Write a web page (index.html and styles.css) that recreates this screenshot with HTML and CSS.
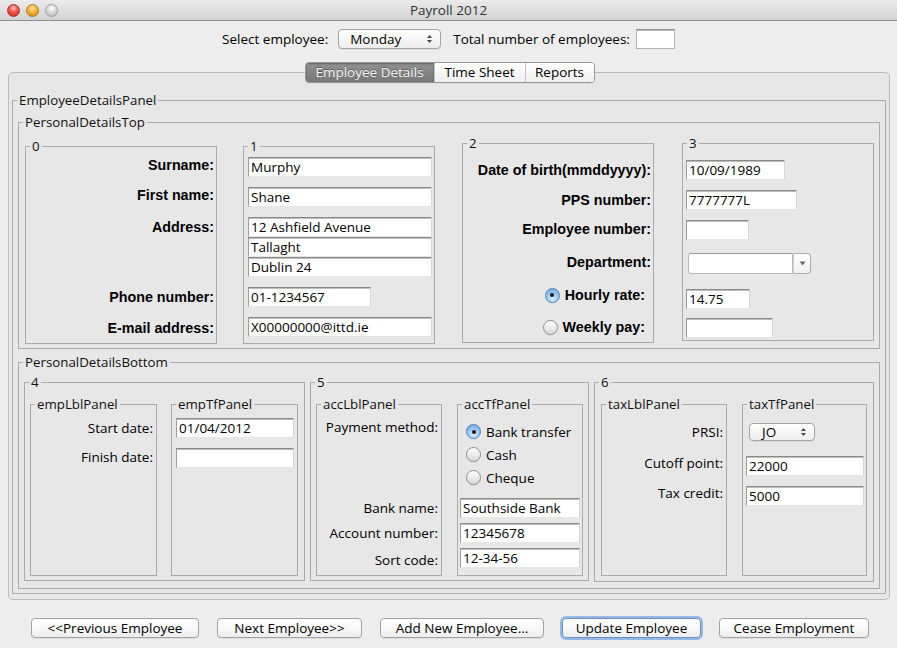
FILE: index.html
```html
<!DOCTYPE html>
<html>
<head>
<meta charset="utf-8">
<title>Payroll 2012</title>
<link rel="stylesheet" href="styles.css">
</head>
<body>
<div class="window">
  <div class="titlebar">
    <div class="lights"><span class="light red"></span><span class="light amber"></span><span class="light grey"></span></div>
    <div class="title">Payroll 2012</div>
    <div></div>
  </div>

  <div class="toprow">
    <span class="txt">Select employee:</span>
    <div class="popup popup-emp"><span class="popup-text">Monday</span><svg class="updown" width="7" height="10" viewBox="0 0 7 10"><path d="M1 4 L3.5 1 L6 4 Z"/><path d="M1 6 L3.5 9 L6 6 Z"/></svg></div>
    <span class="txt txt-total">Total number of employees:</span>
    <div class="tf tf-total"></div>
  </div>

  <div class="tabpane">
    <div class="tabs">
      <div class="tabs-inner">
        <div class="tab tab-sel tab-ed">Employee Details</div>
        <div class="tab tab-ts">Time Sheet</div>
        <div class="tab tab-rep">Reports</div>
      </div>
    </div>
    <div class="tabbody">
      <fieldset class="tb edp">
        <legend>EmployeeDetailsPanel</legend>
        <div class="edp-in">
          <fieldset class="tb pdt">
            <legend>PersonalDetailsTop</legend>
            <div class="pdt-in">
              <fieldset class="tb p01 p0">
                <legend>0</legend>
                <div class="col col-right pad-r2">
                  <div class="blbl mt1">Surname:</div>
                  <div class="blbl mt10">First name:</div>
                  <div class="blbl mt12">Address:</div>
                  <div class="blbl mt50">Phone number:</div>
                  <div class="blbl mt11">E-mail address:</div>
                </div>
              </fieldset>
              <fieldset class="tb p01 p1">
                <legend>1</legend>
                <div class="col pad-l4">
                  <div class="tf w184 mt3">Murphy</div>
                  <div class="tf w184 mt10">Shane</div>
                  <div class="tf w184 mt10">12 Ashfield Avenue</div>
                  <div class="tf w184">Tallaght</div>
                  <div class="tf w184">Dublin 24</div>
                  <div class="tf w123 mt10">01-1234567</div>
                  <div class="tf w184 mt10">X00000000@ittd.ie</div>
                </div>
              </fieldset>
              <fieldset class="tb p23 p2">
                <legend>2</legend>
                <div class="col col-right pad-r2">
                  <div class="blbl mt9">Date of birth(mmddyyyy):</div>
                  <div class="blbl mt10">PPS number:</div>
                  <div class="blbl mt9">Employee number:</div>
                  <div class="blbl mt13">Department:</div>
                  <div class="blbl radio-lbl mt13"><span class="radio on"></span>Hourly rate:</div>
                  <div class="blbl radio-lbl mt12"><span class="radio"></span>Weekly pay:</div>
                </div>
              </fieldset>
              <fieldset class="tb p23 p3">
                <legend>3</legend>
                <div class="col pad-l3">
                  <div class="tf w99 mt9">10/09/1989</div>
                  <div class="tf w111 mt10">7777777L</div>
                  <div class="tf w63 mt10"></div>
                  <div class="combo-edit mt13">
                    <div class="ce-field"></div>
                    <div class="ce-btn"><svg width="7" height="5" viewBox="0 0 7 5"><path d="M0.5 0.5 L6.5 0.5 L3.5 4.5 Z"/></svg></div>
                  </div>
                  <div class="tf w64 mt15">14.75</div>
                  <div class="tf w87 mt9"></div>
                </div>
              </fieldset>
            </div>
          </fieldset>

          <fieldset class="tb pdb">
            <legend>PersonalDetailsBottom</legend>
            <div class="pdb-in">
              <fieldset class="tb p4">
                <legend>4</legend>
                <div class="sub-row sub-row4">
                  <fieldset class="tb sub sub-a">
                    <legend>empLblPanel</legend>
                    <div class="col col-right pad-r3">
                      <div class="lbl mt6">Start date:</div>
                      <div class="lbl mt9">Finish date:</div>
                    </div>
                  </fieldset>
                  <fieldset class="tb sub sub-b4">
                    <legend>empTfPanel</legend>
                    <div class="col pad-l4">
                      <div class="tf w118 mt6">01/04/2012</div>
                      <div class="tf w118 mt10"></div>
                    </div>
                  </fieldset>
                </div>
              </fieldset>
              <fieldset class="tb p5">
                <legend>5</legend>
                <div class="sub-row">
                  <fieldset class="tb sub sub-a">
                    <legend>accLblPanel</legend>
                    <div class="col col-right pad-r3">
                      <div class="lbl mt5">Payment method:</div>
                      <div class="lbl mt61">Bank name:</div>
                      <div class="lbl mt5">Account number:</div>
                      <div class="lbl mt7">Sort code:</div>
                    </div>
                  </fieldset>
                  <fieldset class="tb sub sub-b">
                    <legend>accTfPanel</legend>
                    <div class="col">
                      <div class="radio-row mt8"><span class="radio on"></span>Bank transfer</div>
                      <div class="radio-row"><span class="radio"></span>Cash</div>
                      <div class="radio-row"><span class="radio"></span>Cheque</div>
                      <div class="tf w120 ml2 mt9">Southside Bank</div>
                      <div class="tf w120 ml2 mt5">12345678</div>
                      <div class="tf w120 ml2 mt5">12-34-56</div>
                    </div>
                  </fieldset>
                </div>
              </fieldset>
              <fieldset class="tb p6">
                <legend>6</legend>
                <div class="sub-row sub-row6">
                  <fieldset class="tb sub sub-a">
                    <legend>taxLblPanel</legend>
                    <div class="col col-right pad-r3">
                      <div class="lbl mt10">PRSI:</div>
                      <div class="lbl mt11">Cutoff point:</div>
                      <div class="lbl mt10">Tax credit:</div>
                    </div>
                  </fieldset>
                  <fieldset class="tb sub sub-b6">
                    <legend>taxTfPanel</legend>
                    <div class="col">
                      <div class="popup popup-prsi mt11"><span class="popup-text">JO</span><svg class="updown" width="7" height="10" viewBox="0 0 7 10"><path d="M1 4 L3.5 1 L6 4 Z"/><path d="M1 6 L3.5 9 L6 6 Z"/></svg></div>
                      <div class="tf w118 ml3 mt15">22000</div>
                      <div class="tf w118 ml3 mt10">5000</div>
                    </div>
                  </fieldset>
                </div>
              </fieldset>
            </div>
          </fieldset>
        </div>
      </fieldset>
    </div>
  </div>

  <div class="buttons">
    <div class="btn bw-prev">&lt;&lt;Previous Employee</div>
    <div class="btn bw-next">Next Employee&gt;&gt;</div>
    <div class="btn bw-add">Add New Employee...</div>
    <div class="btn btn-focus bw-upd">Update Employee</div>
    <div class="btn bw-cease">Cease Employment</div>
  </div>
</div>
</body>
</html>
```

FILE: styles.css
```css
* { box-sizing: border-box; }
html, body { margin: 0; padding: 0; }
body {
  background: #ededed;
  font-family: "Open Sans", "DejaVu Sans", sans-serif;
  font-size: 13.5px;
  color: #000;
}
.window { width: 897px; height: 648px; background: #ededed; overflow: hidden; }

/* title bar */
.titlebar {
  height: 21px;
  display: grid;
  grid-template-columns: 1fr auto 1fr;
  align-items: center;
  background: linear-gradient(#ebebeb, #d2d2d2);
  border-bottom: 1px solid #8d8d8d;
}
.lights { display: flex; gap: 6px; padding-left: 7px; }
.light { width: 13px; height: 13px; border-radius: 50%; }
.red { background: radial-gradient(circle at 50% 30%, #ffc1bb 0%, #f1534b 45%, #c7261e 100%); border: 1px solid #a9352f; }
.amber { background: radial-gradient(circle at 50% 30%, #ffe4a8 0%, #f6b03c 45%, #cc800e 100%); border: 1px solid #b07b22; }
.grey { background: radial-gradient(circle at 50% 30%, #ffffff 0%, #d6d6d6 50%, #b4b4b4 100%); border: 1px solid #a0a0a0; }
.title { font-size: 13.5px; color: #333; line-height: 20px; }

/* top row */
.toprow {
  margin-top: 8px;
  height: 20px;
  display: flex;
  justify-content: center;
  align-items: center;
}
.txt { line-height: 20px; }
.popup {
  height: 20px;
  border: 1px solid #a3a3a3;
  border-radius: 4px;
  background: linear-gradient(#ffffff, #f6f6f6 50%, #ececec 100%);
  box-shadow: 0 1px 0 rgba(0,0,0,0.06);
  display: flex;
  align-items: center;
  justify-content: space-between;
}
.popup-text { line-height: 18px; }
.updown { fill: #4a4a4a; }
.popup-emp { width: 103px; margin-left: 10px; padding: 0 7px 0 11px; }
.txt-total { margin-left: 12px; }
.popup-prsi { width: 66px; height: 18px; margin-left: 6px; padding: 0 7px 0 12px; }

/* text field */
.tf {
  height: 20px;
  background: #fff;
  border-top: 1px solid #8a8a8a;
  border-left: 1px solid #9c9c9c;
  border-right: 1px solid #d6d6d6;
  border-bottom: 1px solid #e6e6e6;
  box-shadow: inset 0 1px 0 #bdbdbd;
  padding: 0 2px;
  line-height: 19px;
  white-space: nowrap;
  overflow: hidden;
}
.tf-total { width: 39px; margin-left: 6px; border: 1px solid #b3b3b3; border-top-color: #8a8a8a; }
.w184 { width: 184px; }
.w123 { width: 123px; }
.w99 { width: 99px; }
.w111 { width: 111px; }
.w63 { width: 63px; }
.w64 { width: 64px; }
.w87 { width: 87px; }
.w118 { width: 118px; }
.w120 { width: 120px; }
.ml2 { margin-left: 2px; }
.ml3 { margin-left: 3px; }

/* tabs */
.tabpane { margin: 13px 7px 0 8px; }
.tabs { display: flex; justify-content: center; position: relative; z-index: 1; height: 21px; padding-left: 1px; }
.tabs-inner {
  display: flex;
  border: 1px solid #979797;
  border-radius: 4px;
  overflow: hidden;
  height: 21px;
  box-shadow: 0 1px 0 rgba(0,0,0,0.05);
}
.tab {
  height: 19px;
  line-height: 19px;
  text-align: center;
  background: linear-gradient(#ffffff, #f7f7f7 50%, #eeeeee 100%);
  border-left: 1px solid #c4c4c4;
}
.tab-ed { width: 128px; border-left: none; }
.tab-ts { width: 91px; }
.tab-rep { width: 69px; }
.tab-sel {
  background: linear-gradient(#929292, #787878);
  color: #f4f4f4;
  text-shadow: 0 -1px 0 rgba(0,0,0,0.35);
  box-shadow: inset 0 1px 2px rgba(0,0,0,0.35);
}
.tabbody {
  margin-top: -11px;
  height: 528px;
  border: 1px solid #bcbcbc;
  border-radius: 5px;
  background: #e7e7e7;
  padding-top: 19px;
}

/* titled borders */
.tb {
  margin: 0;
  padding: 0;
  min-width: 0;
  border: 1px solid #ababab;
}
.tb > legend {
  margin-left: 4px;
  padding: 0 2px;
  line-height: 16px;
  height: 16px;
  font-size: 13.3px;
  color: #111;
}
.edp { margin: 0 3px; height: 502px; }
.edp-in { padding: 6px 5px 0 5px; }
.pdt { height: 235px; }
.pdt-in { display: flex; align-items: flex-start; padding-left: 6px; }
.p01 { width: 192px; height: 206px; margin-top: 8px; }
.p1 { margin-left: 26px; }
.p23 { width: 192px; margin-top: 5px; }
.p2 { margin-left: 27px; height: 208px; }
.p3 { margin-left: 28px; height: 206px; }

.pdb { height: 235px; margin-top: 5px; }
.pdb-in { display: flex; align-items: flex-start; padding-left: 5px; }
.p4 { width: 281px; height: 207px; margin-top: 4px; }
.p5 { width: 279px; height: 207px; margin-top: 4px; margin-left: 5px; }
.p6 { width: 280px; height: 208px; margin-top: 4px; margin-left: 5px; }

.sub-row { display: flex; align-items: flex-start; padding: 6px 0 0 5px; }
.sub-row6 { padding-left: 6px; }
.sub { height: 180px; }
.sub-a { width: 126px; }
.sub-row4 .sub-a { width: 127px; }
.sub-b4 { width: 127px; margin-left: 14px; }
.sub-b { width: 126px; margin-left: 15px; }
.sub-b6 { width: 125px; margin-left: 15px; }

/* columns */
.col { display: flex; flex-direction: column; align-items: flex-start; }
.col-right { align-items: flex-end; }
.pad-r2 { padding-right: 2px; }
.pad-r3 { padding-right: 3px; }
.pad-l3 { padding-left: 3px; }
.pad-l4 { padding-left: 4px; }

.blbl {
  font-family: "Liberation Sans", Arial, sans-serif;
  font-weight: bold;
  font-size: 14.3px;
  line-height: 20px;
  white-space: nowrap;
}
.lbl { line-height: 20px; white-space: nowrap; }

.radio-lbl { display: flex; align-items: center; padding-right: 6px; }
.radio-lbl .radio { margin-right: 5px; }
.radio-row { display: flex; align-items: center; height: 23px; padding-left: 8px; white-space: nowrap; }
.radio-row .radio { margin-right: 5px; }

.radio {
  position: relative;
  display: inline-block;
  width: 15px;
  height: 15px;
  border-radius: 50%;
  border: 1px solid #8e8e8e;
  background: linear-gradient(#ffffff, #ececec 50%, #d9d9d9);
  box-shadow: 0 1px 0 rgba(0,0,0,0.05);
  flex: none;
}
.radio.on {
  border-color: #5a82ad;
  background: radial-gradient(circle at 50% 75%, #d7ecfc 0%, #9ccbf3 45%, #5fa2e0 100%);
}
.radio.on::after {
  content: "";
  position: absolute;
  left: 4.5px;
  top: 4.5px;
  width: 4px;
  height: 4px;
  border-radius: 50%;
  background: #1b1b1b;
}

/* editable combo */
.combo-edit { display: flex; width: 123px; height: 21px; margin-left: 2px; }
.ce-field {
  flex: 1;
  background: #fff;
  border: 1px solid #b9b9b9;
  border-top-color: #9a9a9a;
  border-radius: 3px 0 0 3px;
}
.ce-btn {
  width: 18px;
  border: 1px solid #ababab;
  border-left: 1px solid #cfcfcf;
  border-radius: 0 4px 4px 0;
  background: linear-gradient(#ffffff, #f0f0f0);
  display: flex;
  align-items: center;
  justify-content: center;
  fill: #6a6a6a;
}

/* margins */
.mt1 { margin-top: 1px; }
.mt3 { margin-top: 3px; }
.mt5 { margin-top: 5px; }
.mt6 { margin-top: 6px; }
.mt7 { margin-top: 7px; }
.mt8 { margin-top: 8px; }
.mt9 { margin-top: 9px; }
.mt10 { margin-top: 10px; }
.mt11 { margin-top: 11px; }
.mt12 { margin-top: 12px; }
.mt13 { margin-top: 13px; }
.mt15 { margin-top: 15px; }
.mt50 { margin-top: 50px; }
.mt61 { margin-top: 61px; }

/* buttons */
.buttons {
  margin-top: 18px;
  display: flex;
  justify-content: center;
  gap: 18px;
  padding-left: 3px;
}
.btn {
  height: 20px;
  line-height: 18px;
  text-align: center;
  border: 1px solid #a2a2a2;
  border-radius: 4px;
  background: linear-gradient(#ffffff, #f8f8f8 50%, #ededed 100%);
  box-shadow: 0 1px 0 rgba(0,0,0,0.06);
  white-space: nowrap;
}
.btn-focus {
  border-color: #6a8fc4;
  box-shadow: 0 0 0 2px rgba(120,165,225,0.75);
}
.bw-prev { width: 168px; }
.bw-next { width: 145px; }
.bw-add { width: 164px; }
.bw-upd { width: 139px; }
.bw-cease { width: 150px; }
```
